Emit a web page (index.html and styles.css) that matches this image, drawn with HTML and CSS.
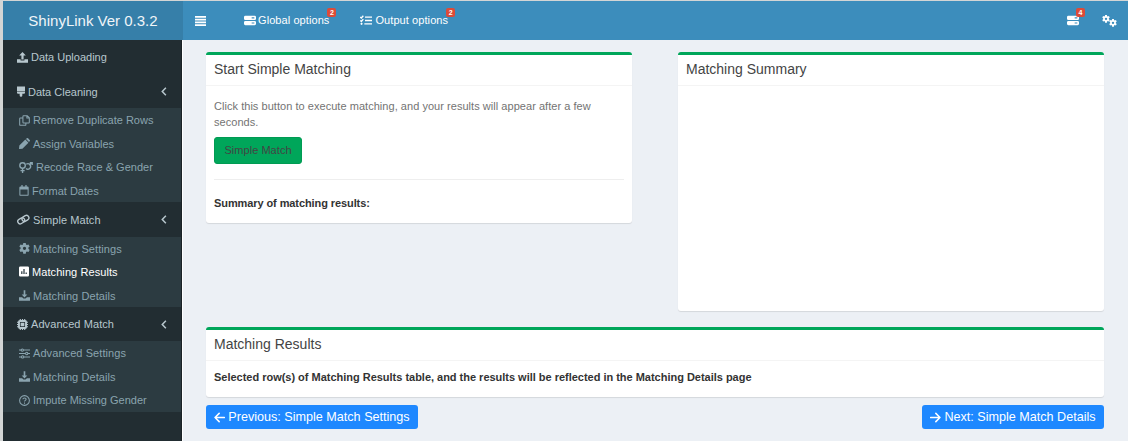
FILE: index.html
```html
<!DOCTYPE html>
<html lang="en">
<head>
<meta charset="utf-8">
<title>ShinyLink</title>
<link rel="stylesheet" href="styles.css">
</head>
<body>
<svg class="sprite" aria-hidden="true">
  <symbol id="upload" viewBox="0 0 16 16"><path d="M8 0 12.800 5H9.600v6H6.400V5H3.200z"/><path d="M0 10.500h5.200v1.800h5.600v-1.800H16V15.500H0z"/></symbol>
  <symbol id="download" viewBox="0 0 16 16"><path d="M6.800 0.500h2.400v6h2.900L8 11 3.900 6.500h2.900z"/><path d="M0 10.500h4.500l2 2h3l2-2H16V15.500H0z"/></symbol>
  <symbol id="brush" viewBox="0 0 12 16"><path d="M0 0.500h12v7.300H0zM0 8.500h12v1.200a1.500 1.500 0 0 1-1.500 1.500H8v2.800a2 2 0 0 1-4 0v-2.800H1.500A1.500 1.500 0 0 1 0 9.700z"/></symbol>
  <symbol id="copy" viewBox="0 0 16 16"><path class="line" d="M6.700 1h5.300l3 3v6.500a1 1 0 0 1-1 1H6.700a1 1 0 0 1-1-1V2a1 1 0 0 1 1-1zM11.500 1v3.500H15M5.500 4.500H2a1 1 0 0 0-1 1V14a1 1 0 0 0 1 1h7a1 1 0 0 0 1-1v-2"/></symbol>
  <symbol id="pencil" viewBox="0 0 16 16"><path d="M9.200 2.300l4.500 4.500L5 15.500l-5 .5L.5 11zM10.200 1.500l1-1a1.400 1.400 0 0 1 2 0l2.300 2.300a1.400 1.400 0 0 1 0 2l-1 1z"/></symbol>
  <symbol id="gender" viewBox="0 0 20 16"><g class="bold"><circle cx="5" cy="5" r="4"/><path d="M5 9V16M2 12.500h6M10 9.300a3.900 3.900 0 1 0 .4-6M15 4.200l3.600-3M15.500 1H19v3.500"/></g></symbol>
  <symbol id="calendar" viewBox="0 0 14 16"><path class="line" d="M2 3h10a1 1 0 0 1 1 1v10a1 1 0 0 1-1 1H2a1 1 0 0 1-1-1V4a1 1 0 0 1 1-1z"/><path d="M1 3h12v3.500H1zM3.200 0h1.800v4H3.200zM9 0h1.800v4H9z"/></symbol>
  <symbol id="link" viewBox="0 0 18 16"><g class="bold" transform="rotate(-30 9 8)"><rect x="0" y="4.500" width="10.500" height="7" rx="3.500"/><rect x="7" y="4.500" width="10.500" height="7" rx="3.500"/></g></symbol>
  <symbol id="cog" viewBox="0 0 16 16"><path fill-rule="evenodd" d="M6.200 0h3.600l.4 2.200 1.300.8 2.300-.8 1.700 3-1.800 1.500v1.800l1.800 1.500-1.700 3-2.300-.8-1.300.8-.4 2.500H6.200l-.4-2.500-1.300-.8-2.300.8-1.700-3 1.800-1.500V6.700L.5 5.200l1.700-3 2.300.8 1.300-.8zM8 5.300a2.400 2.400 0 1 0 0 4.800 2.400 2.400 0 0 0 0-4.800z"/></symbol>
  <symbol id="poll" viewBox="0 0 16 16"><path fill-rule="evenodd" d="M2 0h12a2 2 0 0 1 2 2v12a2 2 0 0 1-2 2H2a2 2 0 0 1-2-2V2a2 2 0 0 1 2-2zM3.500 7.500V12h2V7.500zM7 4v8h2V4zM10.500 9.500V12h2V9.500z"/></symbol>
  <symbol id="chip" viewBox="0 0 16 16"><path fill-rule="evenodd" d="M4 1.500V0h1.600v1.500h1.600V0h1.600v1.500h1.600V0H12v1.500a2.500 2.500 0 0 1 2.500 2.500H16v1.600h-1.500v1.600H16v1.600h-1.500v1.600H16V12h-1.500a2.500 2.500 0 0 1-2.500 2.500V16h-1.600v-1.500H8.800V16H7.200v-1.500H5.600V16H4v-1.500A2.500 2.500 0 0 1 1.500 12H0v-1.600h1.500V8.800H0V7.200h1.500V5.600H0V4h1.500A2.500 2.500 0 0 1 4 1.500zM4.300 4.300v7.400h7.400V4.300zM5.300 5.300h5.400v5.400H5.300z"/></symbol>
  <symbol id="sliders" viewBox="0 0 16 16"><g class="line"><path d="M0 3h3M6.500 3H16M0 8h9.500M13 8h3M0 13h3.500M7 13h9"/><circle cx="4.800" cy="3" r="1.700"/><circle cx="11.200" cy="8" r="1.700"/><circle cx="5.300" cy="13" r="1.700"/></g></symbol>
  <symbol id="question" viewBox="0 0 16 16"><g class="line"><circle cx="8" cy="8" r="7.100"/><path d="M5.600 6.200C5.700 3.500 10.400 3.600 10.400 6.200 10.400 7.900 8 7.900 8 9.600M8 11v1.700"/></g></symbol>
  <symbol id="bars" viewBox="0 0 22 20"><path d="M0 0h22v3.400H0zM0 5.500h22v3.400H0zM0 11h22v3.400H0zM0 16.500h22v3.400H0z"/></symbol>
  <symbol id="server" viewBox="0 0 18 16"><path fill-rule="evenodd" d="M2 1h14a2 2 0 0 1 2 2v2.200a2 2 0 0 1-2 2H2a2 2 0 0 1-2-2V3a2 2 0 0 1 2-2zM11.500 3.300v1.600h4V3.300zM2 8.800h14a2 2 0 0 1 2 2V13a2 2 0 0 1-2 2H2a2 2 0 0 1-2-2v-2.200a2 2 0 0 1 2-2zM11.500 11v1.600h4V11z"/></symbol>
  <symbol id="tasks" viewBox="0 0 18 16"><g class="bold"><path d="M7.500 3H18M7.500 8H18M6.500 13H18M.5 2.800 2 4.300 5 .800M.5 8 2 9.500 5 6"/></g><circle cx="2.300" cy="13" r="1.600"/></symbol>
  <symbol id="arrow-left" viewBox="0 0 16 16"><path class="arrow" d="M15 8H1.500M7.500 2l-6 6 6 6"/></symbol>
  <symbol id="arrow-right" viewBox="0 0 16 16"><path class="arrow" d="M1 8h13.500M8.500 2l6 6-6 6"/></symbol>
  <symbol id="chevron" viewBox="0 0 8 12"><path class="bold" d="M6.500 1 1.700 6l4.800 5"/></symbol>
</svg>
<div class="app">
  <header class="topbar">
    <div class="brand">ShinyLink Ver 0.3.2</div>
    <svg class="bars"><use href="#bars"/></svg>
    <div class="option global"><svg><use href="#server"/></svg><span>Global options</span><b class="badge">2</b></div>
    <div class="option output"><svg><use href="#tasks"/></svg><span>Output options</span><b class="badge">2</b></div>
    <div class="tools">
      <div class="option"><svg><use href="#server"/></svg><b class="badge">4</b></div>
      <div class="cogs"><svg><use href="#cog"/></svg><svg><use href="#cog"/></svg></div>
    </div>
  </header>
  <div class="columns">
    <nav class="sidebar">
      <div class="parent"><svg class="w11"><use href="#upload"/></svg><span>Data Uploading</span></div>
      <div class="parent"><svg class="w8"><use href="#brush"/></svg><span>Data Cleaning</span><svg class="chevron"><use href="#chevron"/></svg></div>
      <div class="submenu">
        <div class="item"><svg class="w11"><use href="#copy"/></svg><span>Remove Duplicate Rows</span></div>
        <div class="item"><svg class="w11"><use href="#pencil"/></svg><span>Assign Variables</span></div>
        <div class="item"><svg class="w14"><use href="#gender"/></svg><span>Recode Race &amp; Gender</span></div>
        <div class="item"><svg class="w10"><use href="#calendar"/></svg><span>Format Dates</span></div>
      </div>
      <div class="parent"><svg class="w13"><use href="#link"/></svg><span class="loose">Simple Match</span><svg class="chevron"><use href="#chevron"/></svg></div>
      <div class="submenu">
        <div class="item"><svg class="w11"><use href="#cog"/></svg><span class="loose">Matching Settings</span></div>
        <div class="item active"><svg class="w10"><use href="#poll"/></svg><span class="loose">Matching Results</span></div>
        <div class="item"><svg class="w11"><use href="#download"/></svg><span class="loose">Matching Details</span></div>
      </div>
      <div class="parent"><svg class="w11"><use href="#chip"/></svg><span class="loose">Advanced Match</span><svg class="chevron"><use href="#chevron"/></svg></div>
      <div class="submenu">
        <div class="item"><svg class="w11"><use href="#sliders"/></svg><span class="loose">Advanced Settings</span></div>
        <div class="item"><svg class="w11"><use href="#download"/></svg><span class="loose">Matching Details</span></div>
        <div class="item"><svg class="w11"><use href="#question"/></svg><span>Impute Missing Gender</span></div>
      </div>
    </nav>
    <main class="content">
      <div class="row">
        <section class="box start">
          <h3>Start Simple Matching</h3>
          <div class="body">
            <p>Click this button to execute matching, and your results will appear after a few<br>seconds.</p>
            <button class="match">Simple Match</button>
            <hr>
            <strong class="summary">Summary of matching results:</strong>
          </div>
        </section>
        <section class="box tall"><h3>Matching Summary</h3></section>
      </div>
      <section class="box results">
        <h3>Matching Results</h3>
        <div class="body"><strong>Selected row(s) of Matching Results table, and the results will be reflected in the Matching Details page</strong></div>
      </section>
      <div class="pager">
        <button class="step prev"><svg><use href="#arrow-left"/></svg><span>Previous: Simple Match Settings</span></button>
        <button class="step next"><svg><use href="#arrow-right"/></svg><span>Next: Simple Match Details</span></button>
      </div>
    </main>
  </div>
</div>
</body>
</html>
```

FILE: styles.css
```css
* { box-sizing: border-box; }
body {
  margin: 0;
  width: 1128px;
  height: 441px;
  overflow: hidden;
  background: #d3d5d5;
  color: #333;
  font: 11px/15.500px "Liberation Sans", Arial, sans-serif;
}
svg { display: block; flex: none; fill: currentColor; }
.sprite { position: absolute; width: 0; height: 0; }
.line, .bold, .arrow { fill: none; stroke: currentColor; stroke-width: 1.500; }
.bold { stroke-width: 2; }
.arrow { stroke-width: 2.200; stroke-linecap: round; stroke-linejoin: round; }
span, strong, h3 { white-space: nowrap; }
.app { height: 441px; padding: 1px 0 0 3px; display: flex; flex-direction: column; }

.topbar { height: 39px; flex: none; display: flex; align-items: center; background: #3c8dbc; color: #fff; }
.brand { width: 180px; height: 39px; background: #367fa9; font-size: 15px; line-height: 39px; text-align: center; color: #f0f5f8; }
.bars { width: 11px; height: 10px; margin-left: 12px; }
.option { position: relative; display: flex; align-items: center; gap: 2px; }
.option svg { width: 12px; height: 11px; }
.option span { letter-spacing: .08px; padding-top: 1px; }
.global { margin-left: 38px; }
.output { margin-left: 31px; }
.output svg { margin-right: 1px; }
.badge {
  position: absolute; right: -7px; top: -4px;
  width: 9px; height: 9px; border-radius: 2px;
  background: #dd4b39; font-size: 7px; line-height: 9px; text-align: center;
}
.tools { margin: 0 12px 0 auto; display: flex; align-items: center; gap: 23px; }
.tools .badge { top: -7px; right: -6px; }
.cogs { display: flex; width: 14px; }
.cogs svg { width: 8px; height: 8px; margin-bottom: 3px; }
.cogs svg + svg { margin: 4px 0 0 -1px; }

.columns { flex: 1; min-height: 0; display: flex; background: #ecf0f5; }
.sidebar { width: 179px; flex: none; background: #222d32; color: #b8c7ce; border-right: 1px solid #1a2226; }
.parent { height: 34.200px; padding: 0 14px 0 14px; display: flex; align-items: center; gap: 3px; }
.parent svg, .item svg { height: 11px; }
.parent span, .item span { padding-top: 2px; }
.submenu { background: #2c3b41; color: #8aa4af; }
.item { height: 23.500px; padding-left: 16px; display: flex; align-items: center; gap: 3px; }
.active { color: #fff; }
.loose { letter-spacing: .08px; }
.w8 { width: 8px; }
.w10 { width: 10px; }
.w11 { width: 11px; }
.w13 { width: 13px; }
.w14 { width: 14px; }
.parent .chevron { width: 6px; height: 9px; margin-left: auto; }

.content { flex: 1; padding: 12px 24px 0 23px; border-left: 1px solid #fff; }
.row { height: 275px; display: flex; justify-content: space-between; align-items: flex-start; }
.box { background: #fff; border-top: 3px solid #00a65a; border-radius: 3px; box-shadow: 0 1px 1px rgba(0, 0, 0, .1); }
.start, .tall { width: 426px; }
.start { height: 171px; }
.tall { height: 259px; }
.results { height: 70px; }
.box h3 { margin: 0; height: 31px; padding-left: 8px; border-bottom: 1px solid #f4f4f4; font-size: 14px; font-weight: 400; line-height: 29px; color: #444; }
.body { padding: 9px 8px; }
.start .body { padding-top: 13px; }
.body p { margin: 0 0 7px; color: #737373; letter-spacing: .04px; }
.body strong { letter-spacing: -.015px; }
.body .summary { letter-spacing: -.09px; }
.match { display: block; width: 88px; height: 27px; padding: 0; border: 1px solid #009b53; border-radius: 3px; background: #00a65a; color: #444; font: inherit; letter-spacing: .05px; }
hr { margin: 15px 0 16px; border: 0; border-top: 1px solid #eee; }
.pager { margin-top: 8px; display: flex; justify-content: space-between; }
.step { height: 24px; padding: 0; border: 0; border-radius: 3px; background: #1e88ff; color: #fff; display: flex; align-items: center; justify-content: center; gap: 3px; font: 12.600px "Liberation Sans", Arial, sans-serif; }
.step svg { width: 11px; height: 11px; }
.prev { width: 212px; }
.next { width: 182px; }
```
